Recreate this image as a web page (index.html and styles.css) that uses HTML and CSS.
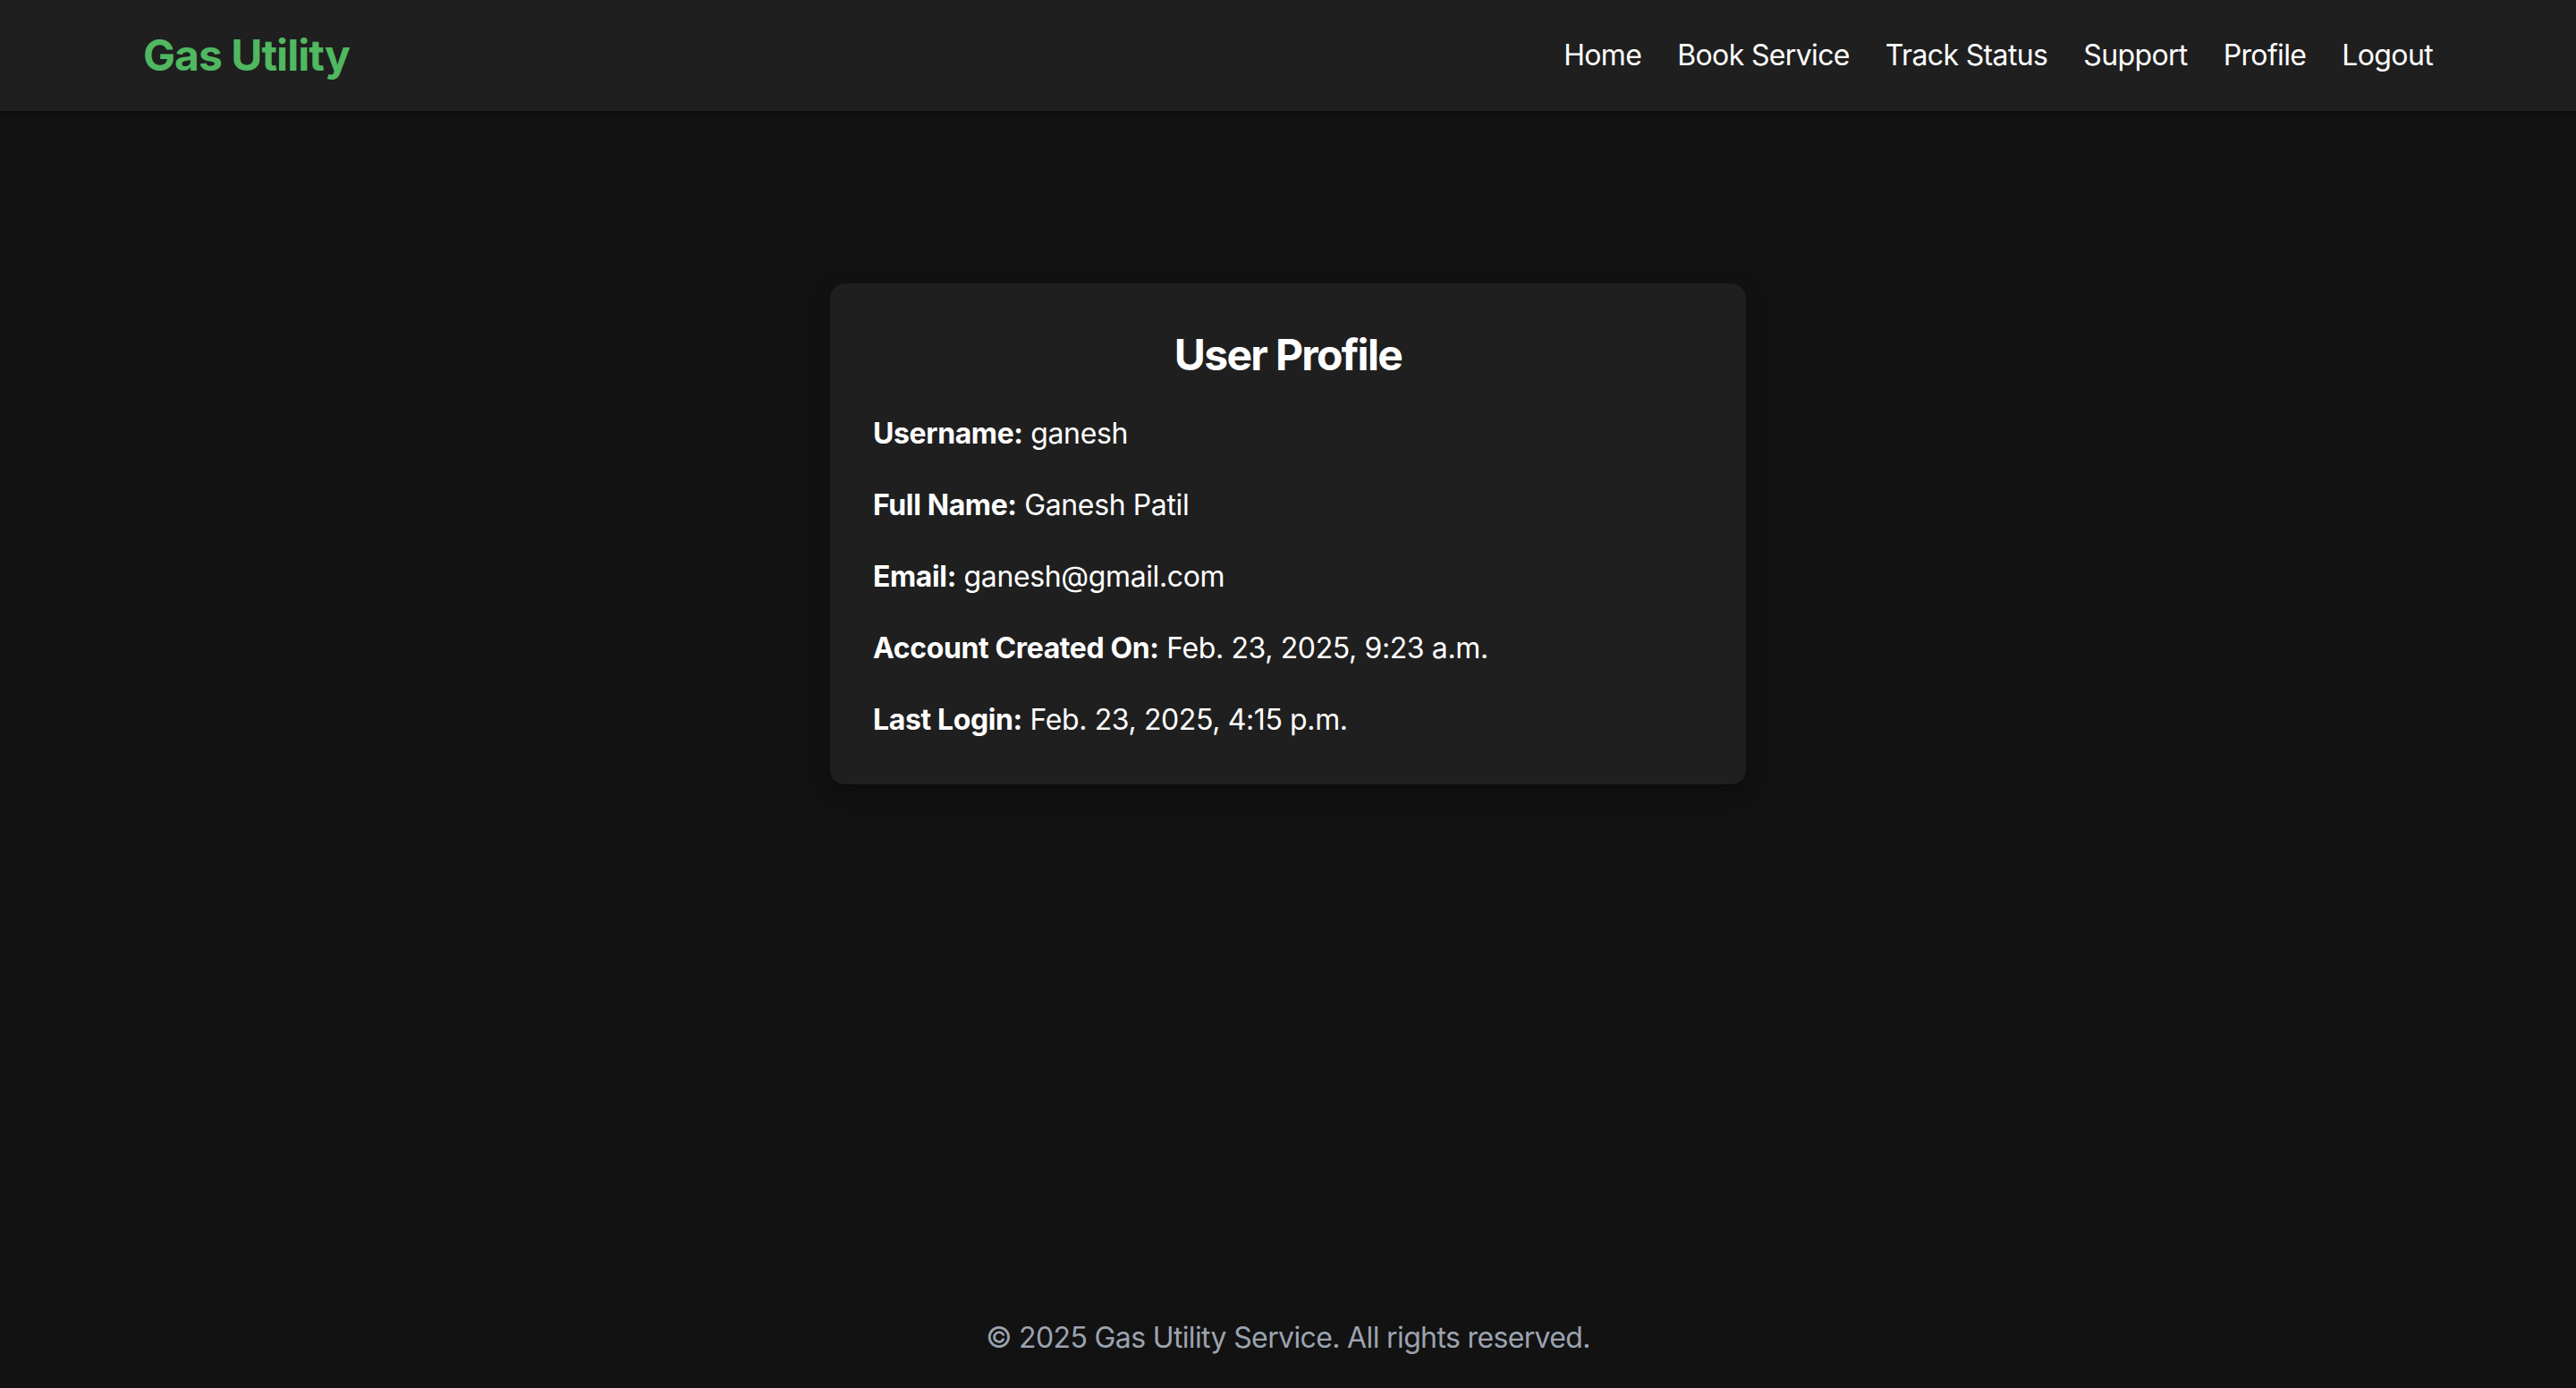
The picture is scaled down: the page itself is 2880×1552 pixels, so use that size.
FILE: index.html
```html
<!DOCTYPE html>
<html lang="en">
<head>
<meta charset="utf-8">
<title>User Profile - Gas Utility</title>
<link rel="stylesheet" href="styles.css">
</head>
<body>
<header class="site-header">
  <div class="container header-inner">
    <a class="logo" href="#">Gas Utility</a>
    <nav class="nav">
      <a href="#">Home</a>
      <a href="#">Book Service</a>
      <a href="#">Track Status</a>
      <a href="#">Support</a>
      <a href="#">Profile</a>
      <a href="#">Logout</a>
    </nav>
  </div>
</header>
<main class="main">
  <section class="card">
    <h2 class="card-title">User Profile</h2>
    <p class="row"><strong>Username:</strong> ganesh</p>
    <p class="row"><strong>Full Name:</strong> Ganesh Patil</p>
    <p class="row"><strong>Email:</strong> ganesh@gmail.com</p>
    <p class="row"><strong>Account Created On:</strong> Feb. 23, 2025, 9:23 a.m.</p>
    <p class="row"><strong>Last Login:</strong> Feb. 23, 2025, 4:15 p.m.</p>
  </section>
</main>
<footer class="footer">
  <p>© 2025 Gas Utility Service. All rights reserved.</p>
</footer>
</body>
</html>
```
FILE: styles.css
```css
* { box-sizing: border-box; }
html, body { margin: 0; padding: 0; }
body {
  background: #121212;
  color: #ffffff;
  font-family: Inter, "Noto Sans", "Liberation Sans", sans-serif;
  font-size: 32px;
  line-height: 48px;
  min-height: 100vh;
  display: flex;
  flex-direction: column;
}
a { color: inherit; text-decoration: none; }
.site-header {
  background: #1f1f1f;
  height: 124px;
  box-shadow: 0 2px 6px rgba(0,0,0,0.3);
}
.container {
  max-width: 2560px;
  margin: 0 auto;
}
.header-inner {
  height: 100%;
  display: flex;
  align-items: center;
  justify-content: space-between;
}
.logo {
  color: #50b860;
  font-size: 48px;
  line-height: 64px;
  font-weight: 700;
  letter-spacing: -0.02em;
}
.nav {
  display: flex;
  gap: 40px;
  font-size: 32px;
  letter-spacing: -0.02em;
}
.main {
  flex: 1;
  display: flex;
  justify-content: center;
  align-items: flex-start;
  padding-top: 193px;
}
.card {
  width: 1024px;
  background: #1f1f1f;
  border-radius: 16px;
  padding: 48px;
  box-shadow: 0 8px 24px rgba(0,0,0,0.35);
}
.card-title {
  margin: 0 0 32px;
  text-align: center;
  font-size: 48px;
  line-height: 64px;
  font-weight: 700;
  letter-spacing: -0.035em;
}
.row {
  margin: 0 0 32px;
  letter-spacing: -0.012em;
}
.row:last-child { margin-bottom: 0; }
.row strong { font-weight: 700; }
.footer {
  text-align: center;
  color: #9ca3af;
  padding: 32px 0;
  letter-spacing: -0.02em;
}
.footer p { margin: 0; }
```
